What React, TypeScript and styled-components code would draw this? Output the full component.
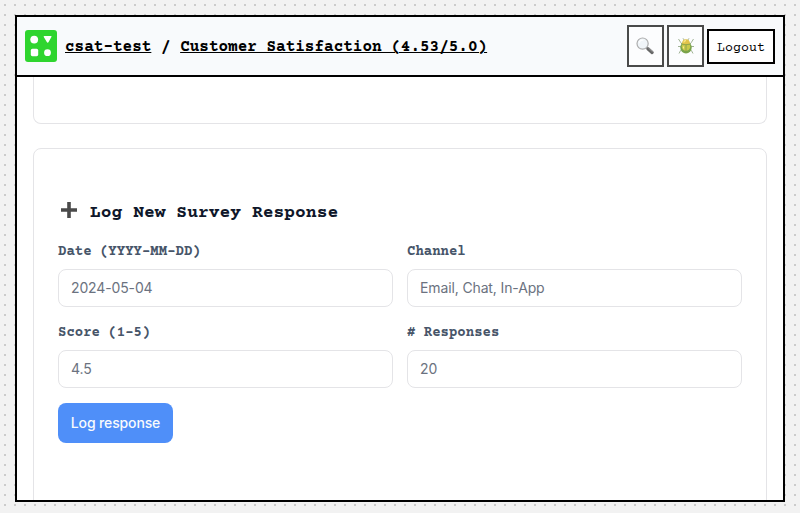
import React from 'react';
import styled, { createGlobalStyle } from 'styled-components';

const GlobalStyle = createGlobalStyle`
  *, *::before, *::after { box-sizing: border-box; }
  body {
    margin: 0;
    background-color: #f2f2f2;
    overflow: hidden;
  }
`;

const mono = `"Courier Prime", "Liberation Mono", monospace`;
const sans = `Inter, "Liberation Sans", sans-serif`;

const Desktop = styled.div`
  height: 100vh;
  padding: 15px 15px 11px;
  background: conic-gradient(from 270deg at 2px 2px, #cbcbcb 90deg, transparent 0) 4px 4px / 10px 10px, #f2f2f2;
`;

const Window = styled.main`
  display: flex;
  flex-direction: column;
  height: 100%;
  border: 2px solid #000;
  background: #fff;
  overflow: hidden;
`;

const Header = styled.header`
  display: flex;
  align-items: center;
  flex: 0 0 60px;
  padding: 0 8px;
  border-bottom: 2px solid #000;
  background: #f8fafc;
`;

const Breadcrumb = styled.nav`
  flex: 1;
  margin-left: 8px;
  padding-top: 2px;
  font: 700 16px/20px ${mono};
  color: #000;
  white-space: pre;
`;

const Crumb = styled.a`
  color: inherit;
  text-decoration: underline 1px;
  text-underline-offset: 1px;
`;

const Actions = styled.div`
  display: flex;
  align-items: center;
  gap: 3px;
`;

const IconButton = styled.button`
  display: flex;
  align-items: center;
  justify-content: center;
  width: 37px;
  height: 42px;
  padding: 0;
  border: 2px solid #000;
  background: #fff;
  opacity: 0.7;
`;

const LogoutButton = styled.button`
  width: 68px;
  height: 35px;
  padding: 5px 0 0;
  border: 2px solid #000;
  background: #fff;
  color: #000;
  font: 400 13.333px/16px ${mono};
`;

const Content = styled.div`
  flex: 1;
  min-height: 0;
  padding: 0 16px;
  overflow: hidden;
`;

const PreviousCard = styled.section`
  height: 47px;
  margin-bottom: 24px;
  border: 1px solid #e4e4e7;
  border-top: 0;
  border-radius: 0 0 8px 8px;
`;

const FormCard = styled.section`
  height: 420px;
  padding: 51px 24px 0;
  border: 1px solid #e4e4e7;
  border-radius: 8px;
`;

const Title = styled.h2`
  display: flex;
  align-items: center;
  gap: 9px;
  height: 26px;
  margin: 0 0 16px;
  padding-left: 1px;
  font: 700 18px/26px ${mono};
  color: #0f172a;

  svg { margin-top: -6px; }
`;

const Fields = styled.form`
  display: grid;
  grid-template-columns: 1fr 1fr;
  column-gap: 14px;
  row-gap: 16px;
`;

const Field = styled.label`
  display: flex;
  flex-direction: column;
  gap: 7px;
  font: 700 14px/20px ${mono};
  color: #475569;
`;

const Input = styled.input`
  width: 100%;
  height: 38px;
  padding: 0 12px 1px;
  border: 1px solid #e4e4e7;
  border-radius: 8px;
  background: #fff;
  font: 400 14px/20px ${sans};
  letter-spacing: -0.13px;
  &::placeholder { color: #6b7280; opacity: 1; }
`;

const Submit = styled.button`
  justify-self: start;
  width: 115px;
  height: 40px;
  margin-top: -1px;
  padding: 0;
  border: 0;
  border-radius: 8px;
  background: #4f8ff9;
  color: #f8fafc;
  font: 500 14px/20px ${sans};
  letter-spacing: -0.13px;
`;

const Logo = () => (
  <svg width="32" height="32" viewBox="0 0 32 32" aria-hidden="true">
    <rect width="32" height="32" rx="3" fill="#2fd52f" />
    <g fill="#fff">
      <circle cx="9.2" cy="9.6" r="3.9" />
      <path d="M19.5 6h6.3q1.3 0 .6 1.1l-2.8 5q-.9 1.200-1.800 0l-3-5Q18.200 6 19.500 6z" />
      <rect x="5.800" y="18.800" width="7.400" height="7.400" rx="1.600" />
      <circle cx="22.500" cy="22.700" r="3.400" />
    </g>
  </svg>
);

const SearchIcon = () => (
  <svg width="19" height="18" viewBox="0 0 19 18" aria-hidden="true">
    <path d="M10.300 10.300l2 2" stroke="#777" strokeWidth="1.500" />
    <path d="M11.900 11.700l4.200 3.800" stroke="#292929" strokeWidth="3.300" strokeLinecap="round" />
    <path d="M12.500 11.100l4.200 3.700" stroke="#888" strokeWidth=".8" />
    <circle cx="6.600" cy="6.600" r="5.600" fill="#edf4f8" stroke="#8d8d8d" strokeWidth="1.200" />
    <path d="M3.300 6a3.500 3.500 0 0 1 4-2.900" fill="none" stroke="#fff" strokeWidth="1.200" />
  </svg>
);

const BugIcon = () => (
  <svg width="18" height="18" viewBox="0 0 18 18" aria-hidden="true">
    <g fill="none" stroke="#7d966c" strokeWidth="1">
      <path d="M7.500 3.500L6 1.300M10.500 3.500L12 1.300M5 7L3.500 5.200 1.500 2M13 7l1.500-1.800L16.500 2M4 9.500H1M14 9.500h3M5 12l-1.500 1.700L2 16.500M13 12l1.500 1.700L16 16.500" />
    </g>
    <ellipse cx="9" cy="10.600" rx="5.700" ry="6" fill="#448000" />
    <ellipse cx="9" cy="9.500" rx="4.300" ry="4.200" fill="#b5b500" />
    <path d="M4.900 6.700Q5.300 2.300 9 2.300t4.100 4.400Q9 8.600 4.900 6.700z" fill="#d8ad00" />
    <path d="M4.900 7.100q4.100 1.400 8.200 0M9 7.500v8.500" fill="none" stroke="#4f7400" strokeWidth=".8" />
    <path d="M6.800 5.500q.2-1.900 2.200-1.900M6.500 9.500v2" fill="none" stroke="#ffe563" strokeWidth="1.100" />
  </svg>
);

const PlusIcon = () => (
  <svg width="22" height="20" viewBox="0 0 22 20" aria-hidden="true">
    <path d="M10 2v16M2 10h16" stroke="#4a4a4a" strokeWidth="3.600" />
  </svg>
);

const fields = [
  { label: 'Date (YYYY-MM-DD)', placeholder: '2024-05-04' },
  { label: 'Channel', placeholder: 'Email, Chat, In-App' },
  { label: 'Score (1-5)', placeholder: '4.5' },
  { label: '# Responses', placeholder: '20' },
];

export default function App() {
  return (
    <>
      <GlobalStyle />
      <Desktop>
        <Window>
          <Header>
            <Logo />
            <Breadcrumb>
              <Crumb>csat-test</Crumb>{' / '}<Crumb>Customer Satisfaction (4.53/5.0)</Crumb>
            </Breadcrumb>
            <Actions>
              <IconButton aria-label="Search"><SearchIcon /></IconButton>
              <IconButton aria-label="Report a bug"><BugIcon /></IconButton>
              <LogoutButton>Logout</LogoutButton>
            </Actions>
          </Header>
          <Content>
            <PreviousCard />
            <FormCard>
              <Title><PlusIcon />Log New Survey Response</Title>
              <Fields>
                {fields.map((f) => (
                  <Field key={f.label}>
                    {f.label}
                    <Input placeholder={f.placeholder} />
                  </Field>
                ))}
                <Submit type="button">Log response</Submit>
              </Fields>
            </FormCard>
          </Content>
        </Window>
      </Desktop>
    </>
  );
}
